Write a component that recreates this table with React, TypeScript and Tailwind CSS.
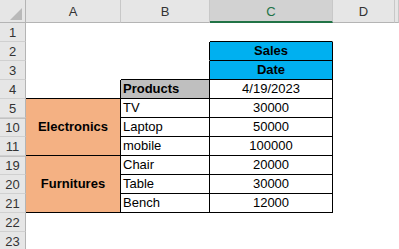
import React from "react";

const font = { fontFamily: '"Liberation Sans", Arial, sans-serif' };

type CellProps = {
    boxed?: boolean;
    merged?: boolean;
    className?: string;
    children?: React.ReactNode;
};

// boxed cells get black right/bottom lines; their top/left lines come from the neighbours
function Cell({ boxed = false, merged = false, className = "", children }: CellProps) {
    const line = boxed ? "border-black" : "border-transparent";
    const align = merged ? "row-span-3 items-center" : "items-end pb-[1px]";
    return (
        <div className={`box-border border-r border-b ${line} flex ${align} text-[13px] leading-[16px] text-black overflow-hidden whitespace-nowrap ${className}`}>
            {children}
        </div>
    );
}

function RowHead({ n, hidden = false }: { n: string; hidden?: boolean }) {
    return (
        <div
            className={`box-border border-r border-r-[#b4b4b4] border-b border-b-[#d0d0d0] bg-[#e6e6e6] flex items-center justify-center text-[13px] leading-[16px] text-[#333] pt-[1px] ${
                hidden ? "shadow-[inset_0_1px_0_#c2c2c2]" : ""
            }`}
        >
            {n}
        </div>
    );
}

function ColHead({ label, selected = false }: { label?: string; selected?: boolean }) {
    return (
        <div
            className={`box-border border-r border-r-[#c8c8c8] flex items-center justify-center text-[13px] pt-[2px] ${
                selected
                    ? "bg-[#d2d2d2] text-[#217346] border-b-2 border-b-[#217346]"
                    : "bg-[#e6e6e6] text-[#333] border-b border-b-[#b4b4b4]"
            }`}
        >
            {label}
        </div>
    );
}

// blank D and E cells for a sheet row
function Tail() {
    return (
        <>
            <Cell />
            <Cell />
        </>
    );
}

const items = [
    { row: "5", name: "TV", amount: "30000" },
    { row: "10", name: "Laptop", amount: "50000", hidden: true },
    { row: "11", name: "mobile", amount: "100000" },
    { row: "19", name: "Chair", amount: "20000", hidden: true },
    { row: "20", name: "Table", amount: "30000" },
    { row: "21", name: "Bench", amount: "12000" },
];

export default function App() {
    return (
        <div className="w-[399px] h-[249px] overflow-hidden bg-white" style={font}>
            <div className="grid grid-cols-[26px_95px_89px_123px_62px_1fr] grid-rows-[23px_repeat(12,19px)]">
                {/* column headers */}
                <div className="box-border border-r border-r-[#b4b4b4] border-b border-b-[#b4b4b4] bg-[#e6e6e6] relative">
                    <svg className="absolute left-0 top-0" width="25" height="22" viewBox="0 0 25 22">
                        <polygon points="22,8 22,20 10,20" fill="#b9b9b9" />
                    </svg>
                </div>
                <ColHead label="A" />
                <ColHead label="B" />
                <ColHead label="C" selected />
                <ColHead label="D" />
                <ColHead />

                {/* row 1 */}
                <RowHead n="1" />
                <Cell />
                <Cell />
                <Cell className="border-b-black" />
                <Tail />

                {/* row 2 */}
                <RowHead n="2" />
                <Cell />
                <Cell className="border-r-black" />
                <Cell boxed className="bg-[#00b0f0] justify-center font-bold">Sales</Cell>
                <Tail />

                {/* row 3 */}
                <RowHead n="3" />
                <Cell />
                <Cell className="border-r-black border-b-black" />
                <Cell boxed className="bg-[#00b0f0] justify-center font-bold">Date</Cell>
                <Tail />

                {/* row 4 */}
                <RowHead n="4" />
                <Cell className="border-r-black border-b-black" />
                <Cell boxed className="bg-[#bfbfbf] pl-[2px] font-bold">Products</Cell>
                <Cell boxed className="justify-center">4/19/2023</Cell>
                <Tail />

                {items.map((it, i) => (
                    <React.Fragment key={it.row}>
                        <RowHead n={it.row} hidden={it.hidden} />
                        {i === 0 && (
                            <Cell boxed merged className="bg-[#f4b183] justify-center font-bold">
                                Electronics
                            </Cell>
                        )}
                        {i === 3 && (
                            <Cell boxed merged className="bg-[#f4b183] justify-center font-bold">
                                Furnitures
                            </Cell>
                        )}
                        <Cell boxed className="pl-[2px]">{it.name}</Cell>
                        <Cell boxed className="justify-center">{it.amount}</Cell>
                        <Tail />
                    </React.Fragment>
                ))}

                {/* rows 22, 23 */}
                {["22", "23"].map((n) => (
                    <React.Fragment key={n}>
                        <RowHead n={n} />
                        <Cell />
                        <Cell />
                        <Cell />
                        <Tail />
                    </React.Fragment>
                ))}
            </div>
        </div>
    );
}
